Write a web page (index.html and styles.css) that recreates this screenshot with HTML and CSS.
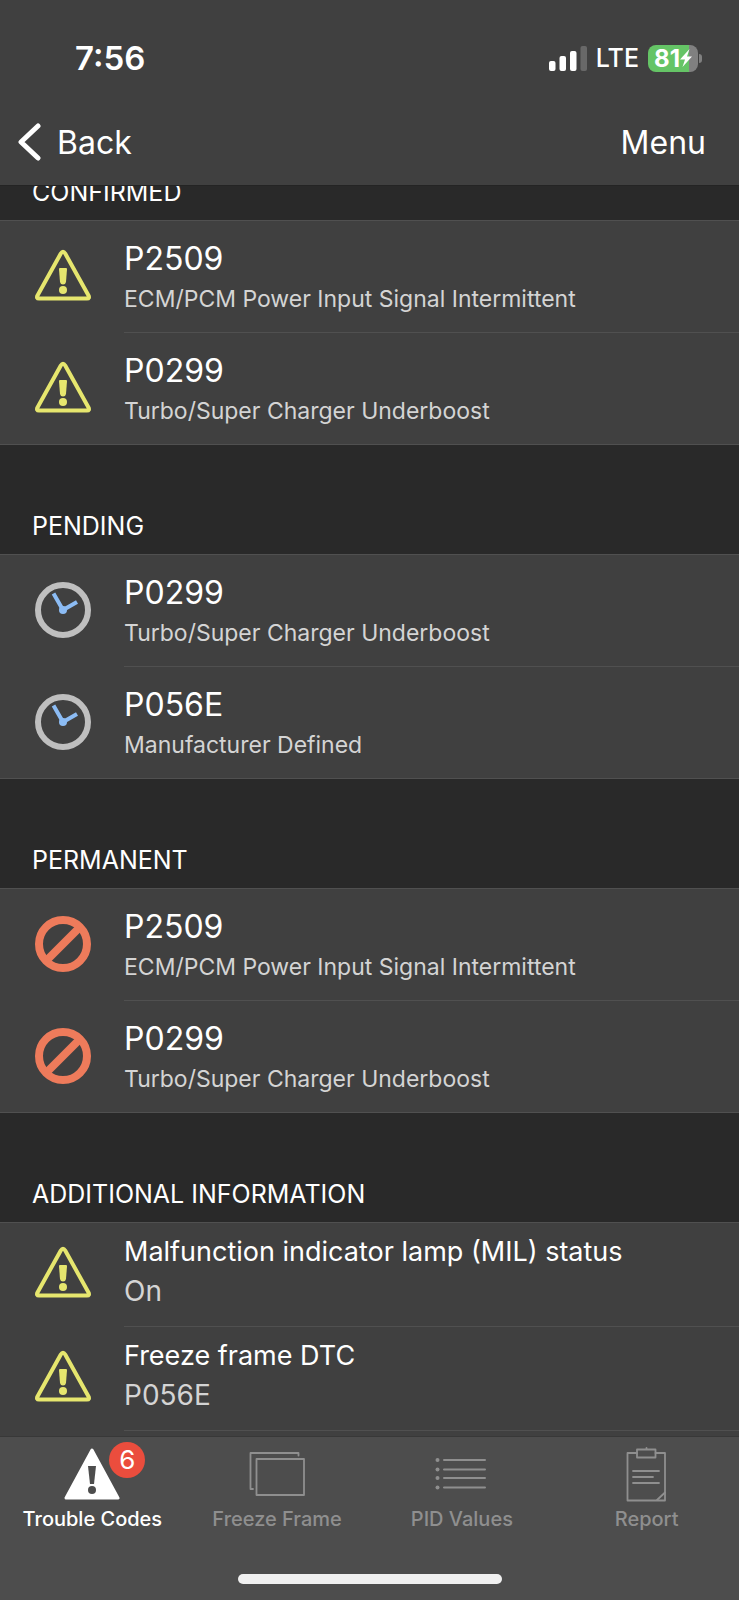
FILE: index.html
```html
<!DOCTYPE html>
<html lang="en">
  <head>
    <meta charset="UTF-8" />
    <meta name="viewport" content="width=device-width, initial-scale=1.0" />
    <title>Trouble Codes</title>
    <link rel="stylesheet" href="styles.css">
  </head>
  <body>
    <!-- icons used more than once -->
    <svg class="sprite" aria-hidden="true">
      <symbol id="warning" viewBox="0 0 56 56">
        <path d="M25.800 5.500 Q28 2 30.200 5.500 L53.500 47.500 Q55 50.500 52 50.500 L4 50.500 Q1 50.500 2.500 47.500 Z" fill="none" stroke="#e6e66e" stroke-width="4" stroke-linejoin="round" />
        <path d="M24 21 Q24 20 25 20 H31 Q32 20 32 21 L31 34 Q30.500 36.500 28 36.500 Q25.500 36.500 25 34 Z" fill="#e6e66e" />
        <circle cx="28" cy="42" r="4" fill="#e6e66e" />
      </symbol>
      <symbol id="clock" viewBox="0 0 56 56">
        <circle cx="28" cy="28" r="25" fill="none" stroke="#bfbfbf" stroke-width="6" />
        <path d="M18.500 11.500 L28 28 L42 20" fill="none" stroke="#8cbcf4" stroke-width="4" />
        <circle cx="28" cy="28" r="4" fill="#8cbcf4" />
      </symbol>
      <symbol id="banned" viewBox="0 0 56 56">
        <circle cx="28" cy="28" r="24" fill="none" stroke="#ee7b5b" stroke-width="8" />
        <path d="M12 44 L44 12" stroke="#ee7b5b" stroke-width="8" />
      </symbol>
    </svg>

    <header class="top">
      <div class="status">
        <span class="time">7:56</span>
        <div class="signals">
          <svg class="bars" viewBox="0 0 38 25" aria-hidden="true">
            <rect x="0" y="15" width="6.500" height="10" rx="2" fill="#fff" />
            <rect x="10.500" y="10" width="6.500" height="15" rx="2" fill="#fff" />
            <rect x="21" y="5" width="6.500" height="20" rx="2" fill="#fff" />
            <rect x="31.500" y="0" width="6.500" height="25" rx="2" fill="#686868" />
          </svg>
          <span class="network">LTE</span>
          <div class="battery">
            <span class="percent">81</span>
            <svg class="bolt" viewBox="0 0 12 18" aria-hidden="true">
              <path d="M9.500 0 L0 10.500 H5 L2.500 18 L12 7.500 H7 Z" fill="#fff" />
            </svg>
          </div>
        </div>
      </div>
      <nav class="navbar">
        <button class="back">
          <svg viewBox="0 0 23 38" aria-hidden="true">
            <path d="M20 3 L3 19 L20 35" fill="none" stroke="#fff" stroke-width="5" stroke-linecap="round" stroke-linejoin="round" />
          </svg>
          Back
        </button>
        <button class="menu">Menu</button>
      </nav>
    </header>

    <main>
      <div class="list">
        <section>
          <h2>CONFIRMED</h2>
          <ul>
            <li>
              <svg class="icon"><use href="#warning" /></svg>
              <div class="text">
                <h3>P2509</h3>
                <p>ECM/PCM Power Input Signal Intermittent</p>
              </div>
            </li>
            <li>
              <svg class="icon"><use href="#warning" /></svg>
              <div class="text">
                <h3>P0299</h3>
                <p>Turbo/Super Charger Underboost</p>
              </div>
            </li>
          </ul>
        </section>

        <section>
          <h2>PENDING</h2>
          <ul>
            <li>
              <svg class="icon"><use href="#clock" /></svg>
              <div class="text">
                <h3>P0299</h3>
                <p>Turbo/Super Charger Underboost</p>
              </div>
            </li>
            <li>
              <svg class="icon"><use href="#clock" /></svg>
              <div class="text">
                <h3>P056E</h3>
                <p>Manufacturer Defined</p>
              </div>
            </li>
          </ul>
        </section>

        <section>
          <h2>PERMANENT</h2>
          <ul>
            <li>
              <svg class="icon"><use href="#banned" /></svg>
              <div class="text">
                <h3>P2509</h3>
                <p>ECM/PCM Power Input Signal Intermittent</p>
              </div>
            </li>
            <li>
              <svg class="icon"><use href="#banned" /></svg>
              <div class="text">
                <h3>P0299</h3>
                <p>Turbo/Super Charger Underboost</p>
              </div>
            </li>
          </ul>
        </section>

        <section class="info">
          <h2>ADDITIONAL INFORMATION</h2>
          <ul>
            <li>
              <svg class="icon"><use href="#warning" /></svg>
              <div class="text">
                <h3>Malfunction indicator lamp (MIL) status</h3>
                <p>On</p>
              </div>
            </li>
            <li>
              <svg class="icon"><use href="#warning" /></svg>
              <div class="text">
                <h3>Freeze frame DTC</h3>
                <p>P056E</p>
              </div>
            </li>
          </ul>
        </section>
      </div>
    </main>

    <footer>
      <nav class="tabs">
        <button class="tab active">
          <span class="tab-icon">
            <svg viewBox="0 0 56 56" aria-hidden="true">
              <path d="M28 3 L54 51 H2 Z" fill="#fff" stroke="#fff" stroke-width="3" stroke-linejoin="round" />
              <path d="M24 19 H32 L30 37 H26 Z" fill="#4d4d4d" />
              <circle cx="28" cy="43" r="4" fill="#4d4d4d" />
            </svg>
            <span class="badge">6</span>
          </span>
          Trouble Codes
        </button>
        <button class="tab">
          <span class="tab-icon">
            <svg viewBox="0 0 56 56" fill="none" stroke="#8f8f8f" stroke-width="1.800" stroke-linecap="round" stroke-linejoin="round" aria-hidden="true">
              <path d="M4 42 H1.500 V6 H49.500 V8.500" />
              <rect x="7.500" y="12" width="47.500" height="36" />
            </svg>
          </span>
          Freeze Frame
        </button>
        <button class="tab">
          <span class="tab-icon">
            <svg viewBox="0 0 56 56" fill="#8f8f8f" stroke="#8f8f8f" stroke-width="2" stroke-linecap="round" aria-hidden="true">
              <path d="M10 13 H51 M10 22.500 H51 M10 31 H51 M10 40.500 H51" />
              <g stroke="none">
                <circle cx="3.500" cy="13" r="2" />
                <circle cx="3.500" cy="22.500" r="2" />
                <circle cx="3.500" cy="31" r="2" />
                <circle cx="3.500" cy="40.500" r="2" />
              </g>
            </svg>
          </span>
          PID Values
        </button>
        <button class="tab">
          <span class="tab-icon">
            <svg viewBox="0 0 56 56" fill="none" stroke="#8f8f8f" stroke-width="1.800" stroke-linecap="round" stroke-linejoin="round" aria-hidden="true">
              <path d="M18 6 H8.500 V53.500 H46 V6 H36.500" />
              <rect x="18" y="2.500" width="18.500" height="8" />
              <path d="M27.500 2 V1 M14 24 H40 M14 30 H34 M14 36 H40 M38 53 L46 45.500" />
            </svg>
          </span>
          Report
        </button>
      </nav>
      <div class="home"></div>
    </footer>
  </body>
</html>
```

FILE: styles.css
```css
* {
  margin: 0;
  padding: 0;
  box-sizing: border-box;
}

body {
  display: flex;
  flex-direction: column;
  height: 100vh;
  background-color: #404040;
  color: #fff;
  font-family: Inter, "Liberation Sans", sans-serif;
}

button {
  border: none;
  background: none;
  color: inherit;
  font: inherit;
  cursor: pointer;
}

ul {
  list-style: none;
}

.sprite {
  position: absolute;
  width: 0;
  height: 0;
}

/* status bar and navigation */
.top {
  flex: none;
  padding: 38px 33px 23px 18px;
}

.status {
  display: flex;
  justify-content: space-between;
  align-items: center;
  height: 40px;
  padding-left: 57px;
}

.time {
  font-size: 33px;
  font-weight: 600;
}

.signals {
  display: flex;
  align-items: center;
  gap: 9px;
  padding-right: 8px;
}

.bars {
  width: 38px;
  height: 25px;
}

.network {
  font-size: 25px;
  font-weight: 500;
}

.battery {
  position: relative;
  display: flex;
  align-items: center;
  justify-content: center;
  width: 50px;
  height: 27px;
  border-radius: 8px;
  background: linear-gradient(to right, #65c466 81%, #808080 81%);
}

.battery::after {
  content: "";
  position: absolute;
  left: 51px;
  top: 9px;
  width: 3px;
  height: 9px;
  border-radius: 0 4px 4px 0;
  background-color: #808080;
}

.percent {
  font-size: 24px;
  font-weight: 700;
}

.bolt {
  width: 12px;
  height: 18px;
}

.navbar {
  display: flex;
  justify-content: space-between;
  align-items: center;
  height: 40px;
  margin-top: 44px;
  font-size: 32px;
}

.back {
  display: flex;
  align-items: center;
  gap: 16px;
}

.back svg {
  width: 23px;
  height: 38px;
}

/* list of codes */
main {
  flex: 1;
  min-height: 0;
  overflow: hidden;
  border-top: 1px solid #242424;
}

/* the list is scrolled a little under the header */
.list {
  margin-top: -75px;
}

h2 {
  display: flex;
  align-items: flex-end;
  height: 109px;
  padding: 0 32px 13px;
  background-color: #292929;
  font-size: 25px;
  font-weight: 400;
  line-height: 30px;
}

section ul {
  border-top: 1px solid #505050;
  border-bottom: 1px solid #505050;
}

li {
  display: flex;
  align-items: center;
  gap: 33px;
  padding-left: 35px;
}

.icon {
  flex: none;
  width: 56px;
  height: 56px;
  margin-bottom: 2px;
}

.text {
  flex: 1;
  height: 112px;
  padding-top: 17px;
  border-bottom: 1px solid #505050;
}

li:last-child .text {
  height: 111px;
  border-bottom: none;
}

h3 {
  font-size: 32px;
  font-weight: 400;
  line-height: 42px;
}

.text p {
  color: #d4d4d4;
  font-size: 23px;
  line-height: 38px;
}

.info ul {
  border-bottom: none;
}

.info .icon {
  margin-bottom: 4px;
}

.info .text,
.info li:last-child .text {
  height: 104px;
  padding-top: 10px;
  border-bottom: 1px solid #505050;
}

.info h3 {
  font-size: 27px;
  line-height: 38px;
}

.info .text p {
  font-size: 28px;
  line-height: 40px;
}

/* tab bar */
footer {
  flex: none;
  height: 164px;
  padding-top: 10px;
  border-top: 1px solid #383838;
  background-color: #4d4d4d;
}

.tabs {
  display: flex;
}

.tab {
  flex: 1 1 0;
  display: flex;
  flex-direction: column;
  align-items: center;
  gap: 4px;
  color: #8f8f8f;
  font-size: 20px;
  font-weight: 500;
  line-height: 24px;
}

.active {
  color: #fff;
}

.tab-icon {
  position: relative;
  width: 56px;
  height: 56px;
}

.tab-icon svg {
  display: block;
  width: 56px;
  height: 56px;
}

.badge {
  position: absolute;
  left: 45px;
  top: -5px;
  width: 36px;
  height: 36px;
  border-radius: 50%;
  background-color: #eb4d3d;
  font-size: 26px;
  font-weight: 400;
  line-height: 36px;
}

.home {
  width: 264px;
  height: 10px;
  margin: 43px auto 0;
  border-radius: 5px;
  background-color: #f0f0f0;
}
```
